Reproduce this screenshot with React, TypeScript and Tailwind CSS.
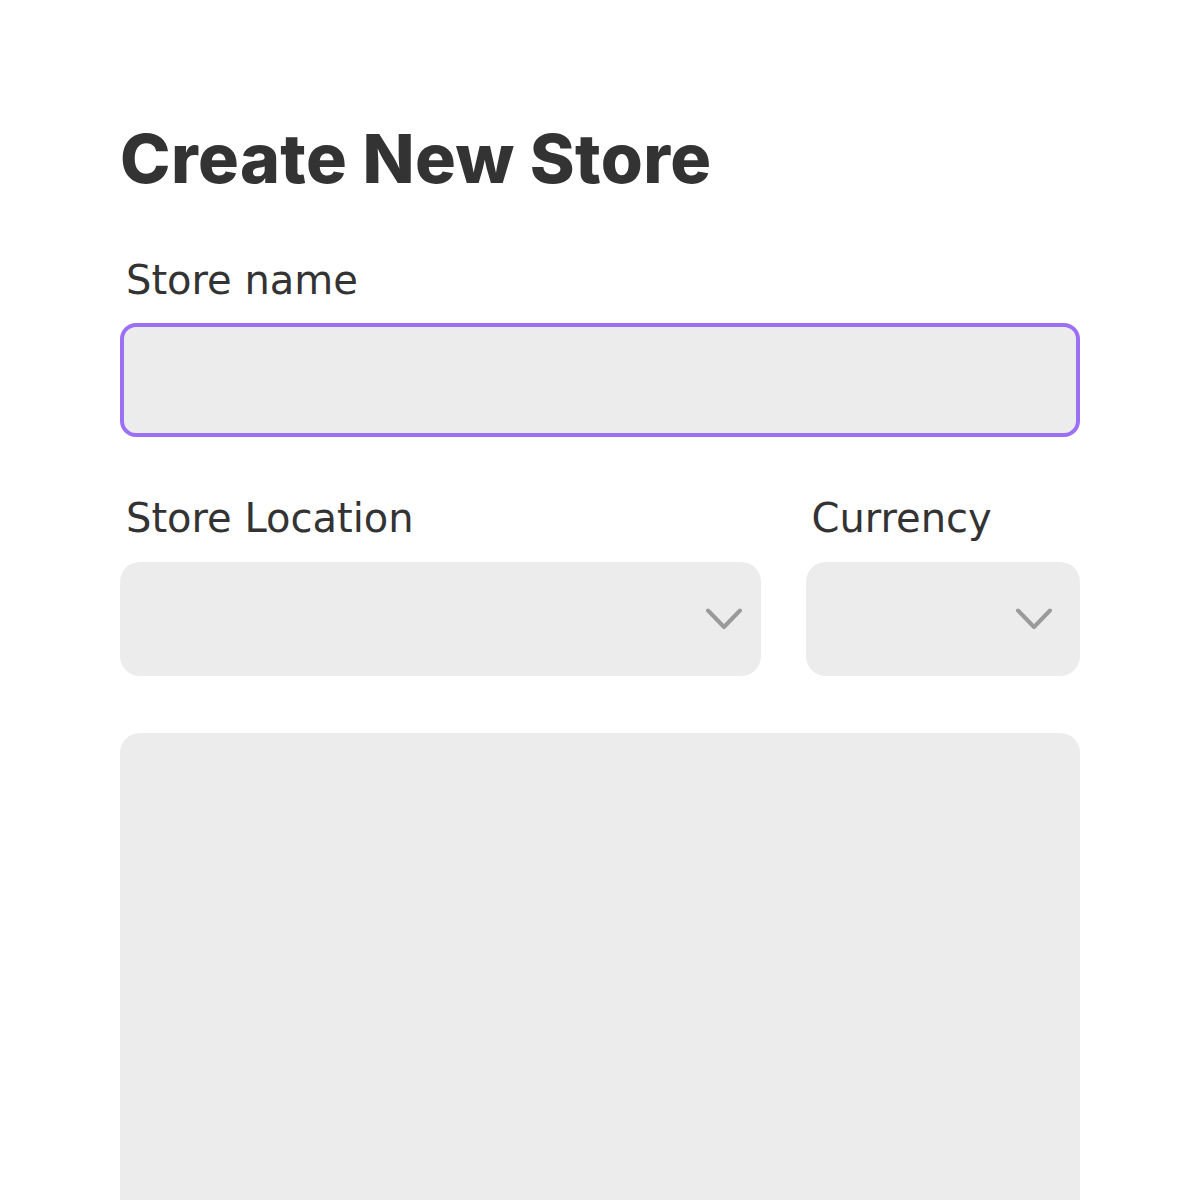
import { FC } from 'react';

const Chevron: FC = () => (
  <svg width="36" height="22" viewBox="0 0 36 22" fill="none" className="shrink-0">
    <path d="M2 2.5L18 19L34 2.5" stroke="#9a9a9a" strokeWidth="4" strokeLinecap="round" strokeLinejoin="round" />
  </svg>
);

const App: FC = () => {
  return (
    <div className="min-h-[1200px] w-full overflow-hidden bg-white font-['DejaVu_Sans',sans-serif] text-[#333333]">
      <div className="mx-auto w-[960px] pt-[118px]">
        <h1 className="font-['Inter',sans-serif] text-[68px] font-extrabold leading-[80px] tracking-[0.4px]">
          Create New Store
        </h1>

        <label className="mt-[57px] block pl-[6px] text-[40px] leading-[50px]">Store name</label>
        <div className="mt-[18px] h-[114px] w-full rounded-[16px] border-4 border-[#9b70f5] bg-[#ececec]" />

        <div className="mt-[56px] grid grid-cols-[7fr_3fr] gap-x-[45px]">
          <div>
            <label className="block pl-[6px] text-[40px] leading-[50px]">Store Location</label>
            <div className="mt-[19px] flex h-[114px] items-center justify-end rounded-[20px] bg-[#ececec] pr-[19px]">
              <Chevron />
            </div>
          </div>
          <div>
            <label className="block pl-[6px] text-[40px] leading-[50px]">Currency</label>
            <div className="mt-[19px] flex h-[114px] items-center justify-end rounded-[20px] bg-[#ececec] pr-[28px]">
              <Chevron />
            </div>
          </div>
        </div>

        <div className="mt-[57px] h-[520px] rounded-[20px] bg-[#ececec]" />
      </div>
    </div>
  );
};

export default App;
